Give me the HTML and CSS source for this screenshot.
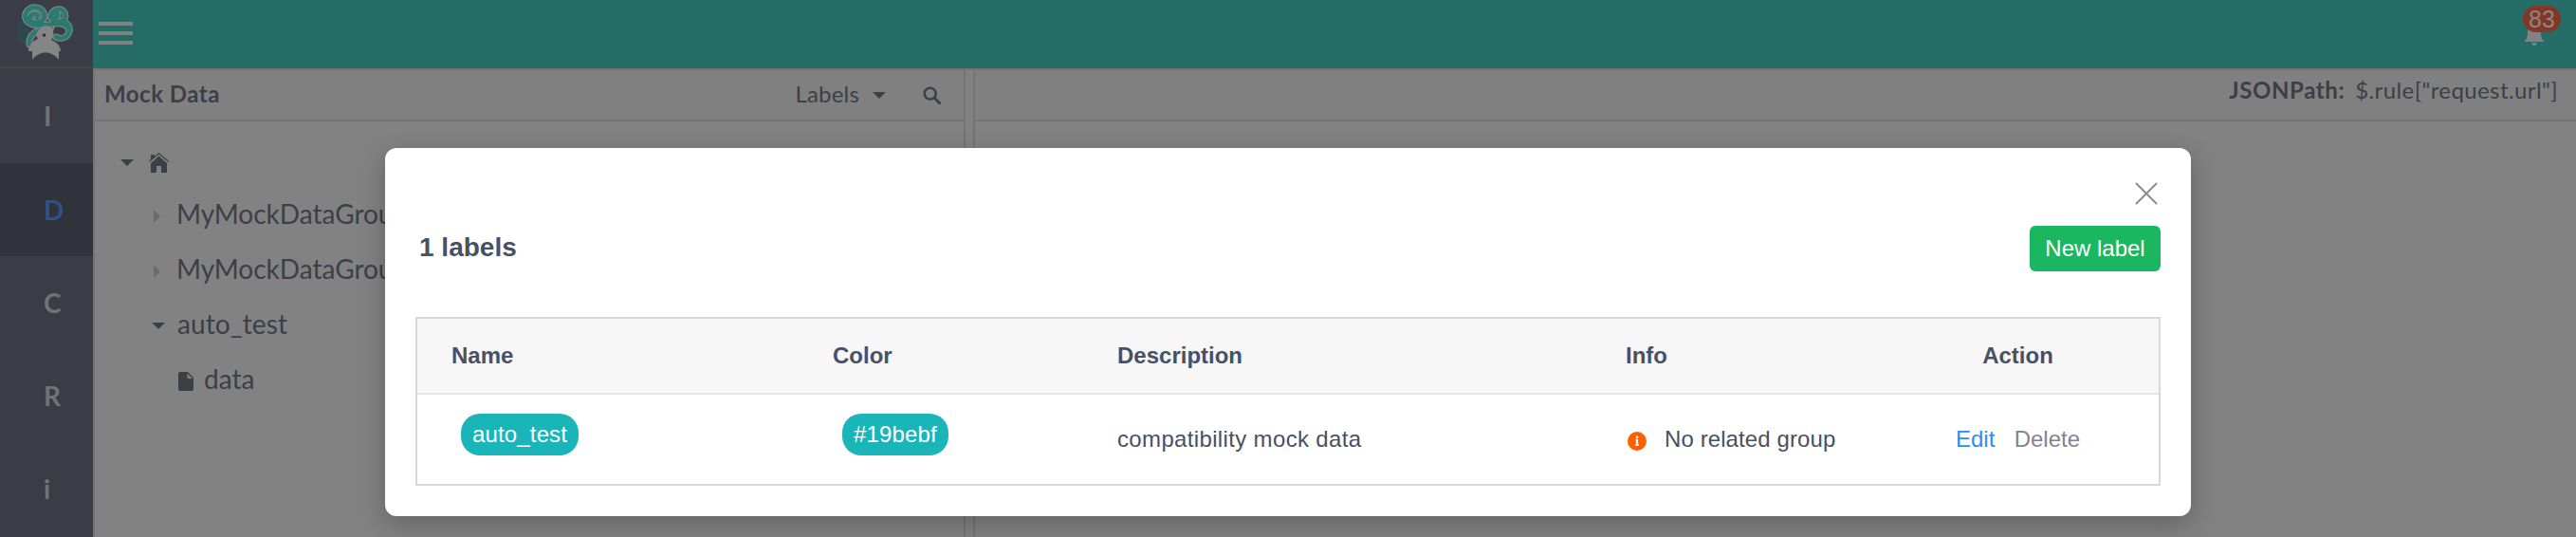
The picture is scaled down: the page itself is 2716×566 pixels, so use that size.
FILE: index.html
```html
<!DOCTYPE html>
<html lang="en">
<head>
<meta charset="utf-8">
<title>Mock Data</title>
<link rel="stylesheet" href="styles.css">
</head>
<body>
<div class="app">
  <nav class="sidebar">
    <div class="logo">
      <svg width="98" height="70" viewBox="0 0 98 70" fill="none" stroke-linecap="round">
        <g fill="#2f474d"><circle cx="25" cy="26" r="7"/><circle cx="24" cy="34" r="7"/><circle cx="25" cy="40" r="7"/><circle cx="73" cy="28" r="6"/><circle cx="73" cy="38" r="5"/></g>
        <g stroke="#7b8583" stroke-width="7">
          <path d="M39 19c2-4-3-6-6-3-4 4 0 9 6 8 6-1 10-6 7-11-3-6-12-7-17-2-5 6-2 13 6 15 9 2 20-2 29-1 8 1 11 7 7 12-3 4-8 4-12 2"/>
          <path d="M59 18c3-1 2-5-1-5-4 0-5 5-2 8 4 4 12 2 13-4 0-5-4-8-9-7-4 1-6 4-7 8M66 22c5 2 8 6 7 11M45 31c-8 2-15 6-14 16"/>
        </g>
        <g stroke="#2b7a72" stroke-width="4.600">
          <path d="M39 19c2-4-3-6-6-3-4 4 0 9 6 8 6-1 10-6 7-11-3-6-12-7-17-2-5 6-2 13 6 15 9 2 20-2 29-1 8 1 11 7 7 12-3 4-8 4-12 2"/>
          <path d="M59 18c3-1 2-5-1-5-4 0-5 5-2 8 4 4 12 2 13-4 0-5-4-8-9-7-4 1-6 4-7 8M66 22c5 2 8 6 7 11M45 31c-8 2-15 6-14 16"/>
        </g>
        <path fill="#858585" d="M41 31c4-5 11-5 14-1l2-3 1 1-2 5c1 4 0 7-2 9 6 2 10 7 10 12h-2v9c-7-10-21-10-28 0v-9h-4c0-6 4-11 10-13-2-3-2-7 1-10z"/>
        <circle cx="46.500" cy="37" r="1.800" fill="#2b3538"/>
      </svg>
    </div>
    <a class="nav-item">I</a>
    <a class="nav-item active">D</a>
    <a class="nav-item">C</a>
    <a class="nav-item">R</a>
    <a class="nav-item">i</a>
  </nav>
  <div class="page">
    <header class="topbar">
      <div class="burger"><i></i><i></i><i></i></div>
      <div class="bell">
        <svg width="22" height="28" viewBox="0 0 22 28" fill="#828282"><path d="M4 10c0-5 3-8 7-8s7 3 7 8c0 8 0 11 4 14H0c4-3 4-6 4-14zM8 25h6c0 4-6 4-6 0z"/></svg>
        <span class="badge">83</span>
      </div>
    </header>
    <main class="content">
      <section class="tree-panel">
        <div class="panel-head">
          <b class="panel-title">Mock Data</b>
          <div class="panel-tools">
            <span class="labels">Labels</span>
            <svg class="labels-caret" width="14" height="8" viewBox="0 0 14 8"><path d="M0 0h14L7 7z"/></svg>
            <svg class="search" width="20" height="20" viewBox="0 0 20 20"><circle cx="7.700" cy="7.700" r="6" fill="none" stroke="#3b3f48" stroke-width="2.500"/><path d="M12 12l6.500 6.500" stroke="#3b3f48" stroke-width="3"/></svg>
          </div>
        </div>
        <div class="tree">
          <div class="node root">
            <svg width="14" height="8" viewBox="0 0 14 8"><path d="M0 0h14L7 7z"/></svg>
            <svg class="home" width="21" height="22" viewBox="0 0 21 22"><path d="M10.500 3.500L19 11v10h-6v-7H8v7H2V11z"/><path d="M0 9.500L10.500 0.800 21 9.500" fill="none" stroke="#3b3f48" stroke-width="1.200"/><path d="M2 2h4v2.500L2 8z"/></svg>
          </div>
          <div class="node group"><svg class="closed" width="8" height="14" viewBox="0 0 8 14"><path d="M0 0v14l7-7z"/></svg><span>MyMockDataGroup1</span></div>
          <div class="node group"><svg class="closed" width="8" height="14" viewBox="0 0 8 14"><path d="M0 0v14l7-7z"/></svg><span>MyMockDataGroup2</span></div>
          <div class="node group open"><svg width="14" height="8" viewBox="0 0 14 8"><path d="M0 0h14L7 7z"/></svg><span>auto_test</span></div>
          <div class="node leaf"><svg width="16" height="20" viewBox="0 0 16 20"><path d="M2 0h8l6 6v12a2 2 0 0 1-2 2H2a2 2 0 0 1-2-2V2a2 2 0 0 1 2-2z"/><path d="M9.500 1.500V7H15z" fill="#828282"/></svg><span>data</span></div>
        </div>
      </section>
      <div class="splitter"></div>
      <section class="detail-panel">
        <div class="panel-head path-head"><b class="path-name">JSONPath:</b><span class="path-value">$.rule["request.url"]</span></div>
      </section>
    </main>
  </div>
</div>

<div class="modal">
  <div class="modal-close"><svg width="24" height="24" viewBox="0 0 24 24"><path d="M1.500 1.500l21 21M22.500 1.500l-21 21" stroke="#8c8c8c" stroke-width="2" stroke-linecap="round"/></svg></div>
  <div class="modal-head">
    <h2>1 labels</h2>
    <button class="new-label">New label</button>
  </div>
  <div class="table">
    <div class="row thead"><span>Name</span><span>Color</span><span>Description</span><span>Info</span><span class="action-title">Action</span></div>
    <div class="row tbody">
      <span class="pill">auto_test</span>
      <span class="pill">#19bebf</span>
      <span class="description">compatibility mock data</span>
      <span class="info"><svg width="20" height="20" viewBox="0 0 20 20"><circle cx="10" cy="10" r="10" fill="#ff5f00"/><path d="M10 4.500v2.400M8.500 8.800H10V14M8.300 14h3.500" stroke="#fff" stroke-width="2.200" fill="none"/></svg>No related group</span>
      <span class="actions"><a class="edit">Edit</a><a class="delete">Delete</a></span>
    </div>
  </div>
</div>
</body>
</html>
```
FILE: styles.css
```css
* { box-sizing: border-box; }
body { margin: 0; height: 566px; overflow: hidden; background: #828282; color: #3b3f48; font-family: Lato, sans-serif; }
svg { display: block; flex: none; fill: #3b3f48; }

.app { display: flex; height: 566px; }
.sidebar { width: 98px; background: #3a3d46; flex: none; }
.logo { height: 72px; border-bottom: 2px solid #454541; }
.logo svg { fill: none; }
.nav-item { display: flex; align-items: center; height: 98px; padding-left: 46px; font-size: 28px; font-weight: 700; color: #727276; }
.nav-item:first-of-type { height: 100px; }
.nav-item.active { background: #30333c; color: #2d5384; }

.page { flex: 1; display: flex; flex-direction: column; min-width: 0; }
.topbar { height: 72px; flex: none; background: #246c65; display: flex; justify-content: space-between; padding: 23px 33px 0 6px; }
.burger { display: flex; flex-direction: column; gap: 6px; }
.burger i { width: 36px; height: 4px; background: #828282; }
.bell { position: relative; width: 22px; height: 28px; margin-top: -3px; }
.bell svg { fill: #828282; }
.badge { position: absolute; left: -1px; top: -14px; width: 40px; height: 28px; border-radius: 14px; background: #823729; color: #8f8583; font-family: "Liberation Sans", Arial, sans-serif; font-size: 25px; line-height: 28px; text-align: center; }

.content { flex: 1; display: flex; border-top: 2px solid #747474; border-left: 2px solid #747474; }
.tree-panel { width: 918px; border-right: 2px solid #747474; }
.splitter { width: 8px; }
.detail-panel { flex: 1; border-left: 2px solid #747474; }
.panel-head { height: 54px; border-bottom: 2px solid #747474; background: #808080; display: flex; align-items: center; justify-content: space-between; padding: 0 23px 3px 10px; font-size: 24px; }
.panel-title { letter-spacing: 0.5px; }
.panel-tools { display: flex; align-items: center; }
.labels { letter-spacing: 0.2px; }
.labels-caret { margin: 4px 39px 0 14px; }
.search { margin-top: 4px; }
.path-head { justify-content: flex-end; padding: 0 19px 11px 0; gap: 11px; }
.path-name { letter-spacing: 0.6px; }
.path-value { letter-spacing: 0.4px; }

.node { display: flex; align-items: center; height: 58px; font-size: 28px; white-space: nowrap; }
.node.root { height: 54px; margin-top: 14px; padding-left: 27px; gap: 16px; }
.node.group { padding-left: 62px; gap: 16px; }
.node.group.open { padding-left: 60px; gap: 13px; }
.node.group.open span { letter-spacing: 0.1px; }
.node.leaf { padding-left: 88px; gap: 11px; }
.node .closed { fill: #696b6f; }
.node svg { margin-top: 5px; }

.modal { position: absolute; left: 406px; top: 156px; width: 1904px; height: 388px; padding: 36px 32px 32px; border-radius: 12px; background: #fff; box-shadow: 0 8px 28px rgba(0, 0, 0, 0.25); font-family: "Liberation Sans", Arial, sans-serif; font-size: 24px; color: #485064; }
.modal-close { display: flex; justify-content: flex-end; height: 46px; padding-right: 3px; }
.modal-head { display: flex; justify-content: space-between; height: 96px; padding-left: 4px; }
.modal-head h2 { margin: 7px 0 0; font-size: 28px; line-height: 32px; }
.new-label { width: 138px; height: 48px; padding: 0; border: 0; border-radius: 6px; background: #1bb760; color: #fff; font: inherit; }
.table { height: 178px; border: 2px solid #d7d7de; }
.row { display: grid; grid-template-columns: 402px 300px 536px 348px 131px; padding-left: 36px; align-items: center; }
.thead { height: 80px; background: #f7f7f7; border-bottom: 2px solid #e5e5e5; font-weight: 700; }
.action-title { text-align: center; }
.tbody { height: 94px; }
.pill { justify-self: start; margin: 0 0 10px 10px; height: 44px; padding: 0 12px; border-radius: 20px; background: #1ab5b8; color: #fff; line-height: 44px; letter-spacing: 0.15px; }
.description { letter-spacing: 0.35px; }
.info { display: flex; align-items: center; gap: 19px; padding-left: 2px; letter-spacing: 0.1px; }
.info svg { margin-top: 3px; }
.actions { display: flex; justify-content: space-between; }
.edit { color: #2d8cf0; }
.delete { color: #80848f; }
```
